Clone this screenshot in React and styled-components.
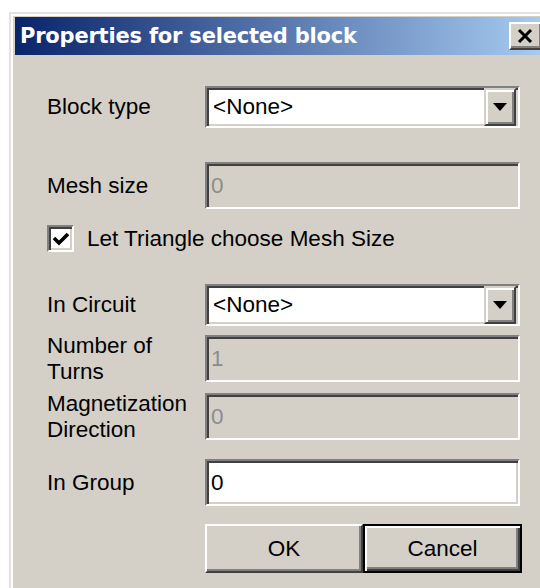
import React from 'react';
import styled, { createGlobalStyle } from 'styled-components';

// Classic Win9x palette, drawn at roughly 2x
const FACE = '#d4d0c8';
const SHADOW = '#808080';
const DARK = '#404040';

const GlobalStyle = createGlobalStyle`
  html, body {
    margin: 0;
    padding: 0;
    background: #ffffff;
    overflow: hidden;
  }
  body {
    width: 540px;
    height: 588px;
    font-family: "Liberation Sans", Arial, sans-serif;
  }
`;

// The window runs on past the right and bottom edges, so it is clipped there
const Window = styled.div`
  margin: 12px 0 0 9px;
  width: 531px;
  height: 576px;
  box-sizing: border-box;
  overflow: hidden;
  padding: 3px 0 0 4px;
  background: ${FACE};
  border-top: 2px solid #e4e2dc;
  border-left: 2px solid #e4e2dc;
  box-shadow: inset 2px 2px #ffffff;
`;

const TitleBar = styled.div`
  height: 38px;
  display: flex;
  align-items: center;
  justify-content: space-between;
  padding: 0 0 0 5px;
  background: linear-gradient(to right, #0a246a, #a6caf0);
`;

const Title = styled.span`
  color: #ffffff;
  font-family: "DejaVu Sans", Verdana, sans-serif;
  font-weight: bold;
  font-size: 21px;
  letter-spacing: -0.2px;
`;

const CloseButton = styled.button`
  box-sizing: border-box;
  width: 34px;
  height: 28px;
  margin-right: -3px;
  padding: 0 3px 0 0;
  display: flex;
  align-items: center;
  justify-content: center;
  background: ${FACE};
  border: 2px solid;
  border-color: #ffffff ${DARK} ${DARK} #ffffff;
  box-shadow: inset -2px -2px ${SHADOW};
`;

const Content = styled.div`
  display: flex;
  flex-direction: column;
  padding: 31px 0 0 32px;
`;

const Row = styled.div`
  display: grid;
  grid-template-columns: 158px 315px;
  align-items: center;
  margin-top: ${(p) => p.$top || 0}px;
`;

const Label = styled.div`
  font-size: 22.5px;
  line-height: 26px;
  color: #000000;
  margin: ${(p) => (p.$lines === 2 ? '-3px 0' : '0')};
`;

const Sunken = styled.div`
  box-sizing: border-box;
  height: ${(p) => p.$h}px;
  display: flex;
  align-items: center;
  background: ${(p) => (p.$disabled ? FACE : '#ffffff')};
  border: 2px solid;
  border-color: ${SHADOW} #ffffff #ffffff ${SHADOW};
  box-shadow: inset 2px 2px ${DARK}, inset -2px -2px ${FACE};
  font-size: 22.5px;
  color: ${(p) => (p.$disabled ? '#8c8c8c' : '#000000')};
`;

const FieldText = styled.span`
  flex: 1;
  padding-left: ${(p) => p.$pad || 6}px;
`;

const DropButton = styled.div`
  box-sizing: border-box;
  width: 32px;
  height: 100%;
  margin: 2px 2px 2px 0;
  display: flex;
  align-items: center;
  justify-content: center;
  background: ${FACE};
  border: 2px solid;
  border-color: ${FACE} ${DARK} ${DARK} ${FACE};
  box-shadow: inset 2px 2px #ffffff, inset -2px -2px ${SHADOW};
`;

const CheckRow = styled.label`
  display: flex;
  align-items: center;
  gap: 13px;
  margin-top: 16px;
  font-size: 22.5px;
`;

const CheckBox = styled.span`
  box-sizing: border-box;
  width: 27px;
  height: 27px;
  display: flex;
  align-items: center;
  justify-content: center;
  background: #ffffff;
  border: 2px solid;
  border-color: ${SHADOW} #ffffff #ffffff ${SHADOW};
  box-shadow: inset 2px 2px ${DARK}, inset -2px -2px ${FACE};
`;

const Buttons = styled.div`
  display: flex;
  margin: 18px 0 0 158px;
`;

const PushButton = styled.button`
  box-sizing: border-box;
  width: ${(p) => p.$w}px;
  height: 49px;
  padding: 0;
  font-family: "Liberation Sans", Arial, sans-serif;
  font-size: 22.5px;
  color: #000000;
  background: ${FACE};
  border: 2px solid;
  border-color: ${(p) =>
    p.$default ? '#000000' : `#ffffff ${DARK} ${DARK} #ffffff`};
  box-shadow: ${(p) =>
    p.$default
      ? `inset 2px 2px #ffffff, inset -2px -2px ${DARK}, inset -4px -4px ${SHADOW}`
      : `inset -2px -2px ${SHADOW}`};
`;

function Arrow() {
  return (
    <svg width="14" height="8" viewBox="0 0 14 8">
      <path d="M0 0h14L7 8z" fill="#000" />
    </svg>
  );
}

function ComboBox({ value }) {
  return (
    <Sunken $h={42}>
      <FieldText>{value}</FieldText>
      <DropButton>
        <Arrow />
      </DropButton>
    </Sunken>
  );
}

function Edit({ value, disabled }) {
  return (
    <Sunken $h={47} $disabled={disabled}>
      <FieldText $pad={4}>{value}</FieldText>
    </Sunken>
  );
}

export default function App() {
  return (
    <>
      <GlobalStyle />
      <Window>
        <TitleBar>
          <Title>Properties for selected block</Title>
          <CloseButton>
            <svg width="16" height="14" viewBox="0 0 16 14">
              <path d="M2 1l12 12M14 1L2 13" stroke="#000" strokeWidth="3" />
            </svg>
          </CloseButton>
        </TitleBar>
        <Content>
          <Row>
            <Label>Block type</Label>
            <ComboBox value="<None>" />
          </Row>
          <Row $top={34}>
            <Label>Mesh size</Label>
            <Edit value="0" disabled />
          </Row>
          <CheckRow>
            <CheckBox>
              <svg width="18" height="16" viewBox="0 0 18 16">
                <path d="M2 7l5 5 9-9" stroke="#000" strokeWidth="3.6" fill="none" />
              </svg>
            </CheckBox>
            Let Triangle choose Mesh Size
          </CheckRow>
          <Row $top={32}>
            <Label>In Circuit</Label>
            <ComboBox value="<None>" />
          </Row>
          <Row $top={9}>
            <Label $lines={2}>
              Number of
              <br />
              Turns
            </Label>
            <Edit value="1" disabled />
          </Row>
          <Row $top={11}>
            <Label $lines={2}>
              Magnetization
              <br />
              Direction
            </Label>
            <Edit value="0" disabled />
          </Row>
          <Row $top={19}>
            <Label>In Group</Label>
            <Edit value="0" />
          </Row>
          <Buttons>
            <PushButton $w={158}>OK</PushButton>
            <PushButton $w={159} $default>
              Cancel
            </PushButton>
          </Buttons>
        </Content>
      </Window>
    </>
  );
}
